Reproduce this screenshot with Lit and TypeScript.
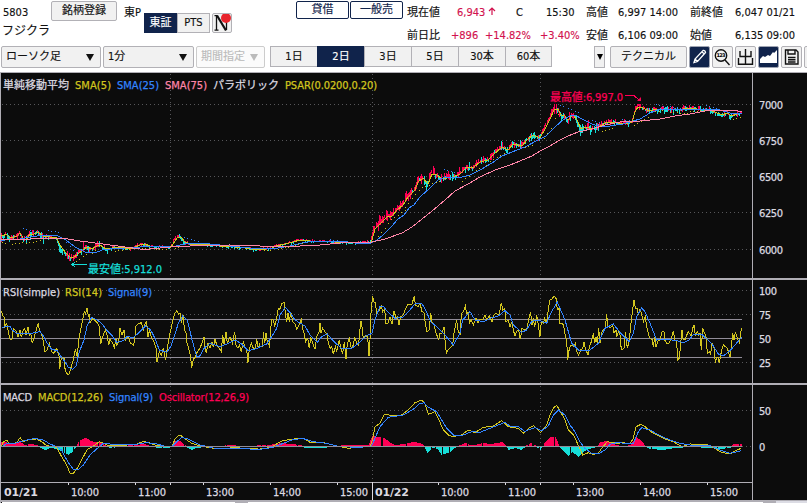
import { LitElement, html, svg, css } from "lit";
import { customElement, property } from "lit/decorators.js";

type Point = [number, number];

/** Parses "x,y x,y …" given in thirds of a pixel, relative to an origin. */
const trace = (ox: number, oy: number, data: string): Point[] =>
  data.trim().split(/\s+/).map((p) => {
    const [x, y] = p.split(",").map(Number);
    return [ox + x / 3, oy + y / 3] as Point;
  });

const pts = (data: string): Point[] =>
  data.trim().split(/\s+/).map((p) => p.split(",").map(Number) as Point);

const valueAt = (line: Point[], x: number): number => {
  for (let i = 1; i < line.length; i++) {
    if (x <= line[i][0]) {
      const [x0, y0] = line[i - 1];
      const [x1, y1] = line[i];
      return x1 === x0 ? y1 : y0 + ((y1 - y0) * (x - x0)) / (x1 - x0);
    }
  }
  return line[line.length - 1][1];
};

const toPath = (line: Point[]): string =>
  line.map(([x, y], i) => `${i ? "L" : "M"}${x.toFixed(2)} ${y.toFixed(2)}`).join("");

const sma5 = pts(`1,235 3,236 6,234 10,238 14,237 17,236 20,233 23,238 26,240 30,234 34,234 38,232 43,236 50,237 56,237
 60,245 65,252 70,257 73,258 78,254 83,250 87,247 92,249 97,246 100,245 106,249 112,248 120,247 130,249 140,245 145,244
 150,246 160,247 171,247 175,241 178,237 181,237 185,242 190,244 200,244 210,245 220,246 235,247 245,248 260,250 272,248
 276,246 285,244 293,242 300,240 310,241 320,241 335,242 350,243 360,242 371,242 372,240 375,229 377,227 382,222 387,217
 392,216 397,210 403,205 408,197 415,190 418,182 423,178 428,184 432,174 437,175 442,179 447,178 453,177 460,174 467,167
 473,168 480,162 488,160 493,155 502,147 508,150 513,144 522,146 527,140 533,135 540,138 545,129 550,119 554,110 558,109
 561,115 564,115 568,120 573,115 577,120 581,129 585,127 593,129 600,126 607,122 613,122 623,124 632,122 635,112 638,107
 643,108 647,110 653,110 663,109 680,110 687,108 697,109 707,109 715,112 722,115 727,113 732,116 737,114 742,113`);

const sma25 = pts(`1,241 8,239 20,239 30,237 45,235 58,236 66,240 75,247 85,252 95,253 102,250 110,249 125,248 140,247 155,246
 172,247 180,245 190,243 200,243 210,244 230,246 250,248 272,249 290,246 302,243 315,241 340,241 355,243 371,243 377,240
 383,235 392,226 398,219 404,215 409,208 414,205 420,197 430,188 438,180 443,178 462,177 470,175 480,170 492,163 502,156
 512,152 525,147 538,140 546,136 555,127 563,120 570,116 575,115 582,119 592,124 602,127 610,126 623,124 633,121 640,119
 650,113 660,109 680,109 707,109 720,110 730,113 742,114`);

const sma75 = pts(`1,239 30,239 55,238 68,239 80,241 95,243 110,245 125,247 140,249 150,249 170,247 190,246 230,245 260,246
 280,247 300,246 320,245 340,243 372,242 385,239 402,233 412,227 422,219 432,211 445,200 455,191 468,184 480,177 495,170
 510,165 520,161 532,156 540,151 550,146 558,141 568,136 578,132 592,129 605,125 620,122 640,121 660,119 675,116 690,114
 705,111 715,110 730,110 738,111 742,111`);

const sarAbove = [
  "23,228 35,231", "48,230 61,232", "63,238 76,253", "105,244 108,244", "184,237 200,242", "205,243 220,245",
  "330,239 342,241", "444,169 456,172", "560,105 566,107", "568,108 580,113", "592,120 606,124",
  "622,119 634,121", "656,104 668,107", "670,106 685,109", "706,105 718,109", "720,110 732,113",
].map(pts);

const sarBelow = [
  "2,242 8,243", "12,244 24,242", "26,243 40,240", "76,261 88,253", "92,253 96,250", "115,251 135,248",
  "142,248 168,249", "175,248 185,245", "250,249 271,250", "278,249 303,243", "378,236 390,221",
  "391,219 405,210", "405,207 420,188", "422,187 442,180", "462,181 475,171", "476,170 488,164",
  "490,161 505,152", "518,149 534,144", "544,138 554,123", "555,118 560,112", "602,131 615,127",
  "634,125 650,115", "652,112 664,110", "670,112 688,113", "690,111 704,110", "733,119 742,116",
].map(pts);

const rsi: Point[] = [
  ...trace(0, 280, `5,93 8,108 12,110 14,140 20,130 24,150 30,178 36,178 40,145 45,150 50,155 54,172 60,150 64,172 70,150
  74,145 78,165 84,140 88,165 92,160 97,190 103,170 110,145 115,130 118,152 124,160 130,185 135,215 140,212 148,190 155,215
  162,220 170,205 178,230 179,268 184,232 192,235 194,262 198,275 203,284 208,282 215,255 220,240 226,208 232,230 236,180
  242,150 248,120 253,95 257,102 261,83 265,108 268,105 270,128 278,115 285,122 292,128 298,140 302,192 308,170 316,150
  320,160 326,195 330,178 338,190 343,202 348,178 350,195 356,185 360,145 366,165 372,150 376,180 384,170 392,190 400,195
  404,185 407,140 414,132 424,128 430,150 436,128 440,125 444,170 448,150 455,175 462,185 468,205 471,247 478,215 484,225
  490,205 497,240 500,215 505,185 510,160 517,128 524,100 531,92 536,103 540,100 544,128 550,105 553,150 558,160 560,185
  566,205 572,230 575,264 580,238 586,232 592,215 600,205 606,188 612,172 615,205 619,218 624,190 630,205 636,185 640,200
  645,178 652,200 658,205 664,215 668,165 672,192 678,155 682,190 690,170 697,190 704,155 708,195 714,205 718,195 724,215
  730,185 735,200 740,210 744,248 748,205 754,190 760,205 766,205 770,178 775,205 779,190`),
  ...trace(260, 280, `0,200 8,200 10,155 14,190 18,160 22,185 28,198 32,160 34,118 40,120 44,140 50,115 55,85 60,88 65,70
  73,68 76,100 80,125 84,100 88,125 92,95 98,125 104,130 110,148 118,132 124,118 128,145 132,160 137,185 143,175 148,205
  152,172 158,190 165,208 170,170 178,155 180,128 183,160 188,145 195,155 202,165 205,190 210,205 215,200 220,222 226,200
  230,215 238,180 242,205 248,220 253,185 258,237 262,190 268,175 274,205 280,195 284,172 290,190 296,195 298,165 303,122
  306,140 310,175 318,165 323,172 327,228 330,180 332,110 335,75 338,48 341,65 346,68 350,100 358,90 364,78 368,95 374,88
  378,130 384,130 390,112 396,132 402,92 408,115 412,110 417,135 422,110 430,105 437,85 445,72 456,72 463,48 466,75 474,80
  480,70 486,95 492,98 496,130 501,155 508,150 512,98 516,125 522,135 528,160 536,178 540,160 546,160 552,142 555,180
  559,220 564,210 570,205 578,195 582,160 590,120 594,150 600,165 604,100 610,95 616,78 620,100 625,98 628,130 634,120
  640,135 648,115 654,130 660,118 668,120 675,105 680,120 688,108 696,125 702,105 708,100 714,105 718,100 724,68 728,90
  734,85 738,125 744,120 750,140 756,125 760,150 765,168 772,150 776,150 781,178 786,145 792,150 800,148 808,110`),
  ...trace(530, 280, `2,97 6,135 10,115 14,142 20,105 24,130 30,170 34,125 40,130 44,115 50,130 56,80 60,60 66,58 72,48
  78,55 82,90 88,85 90,130 98,130 104,150 106,170 110,180 113,240 118,205 124,195 130,198 136,190 140,215 146,225 152,210
  158,205 162,185 166,205 174,225 178,200 184,185 190,160 194,190 198,170 202,190 206,145 210,190 216,155 220,150 226,145
  230,103 234,140 242,142 248,135 252,160 258,150 260,170 266,155 270,165 274,210 282,205 286,155 292,205 298,180 304,120
  308,90 312,60 316,85 322,85 325,105 330,88 334,100 340,125 346,110 350,140 356,165 360,175 366,178 370,200 374,170
  378,200 384,182 390,180 396,155 402,155 404,180 410,190 416,190 424,175 430,152 434,178 440,185 443,240 448,235 452,190
  456,150 460,180 466,178 474,155 480,162 484,170 488,145 492,135 496,165 502,155 506,165 510,160 514,210 518,145 524,160
  528,170 532,220 538,215 542,222 546,190 552,205 556,248 560,232 564,232 568,250 574,215 580,195 586,200 592,205 600,230
  604,200 608,160 612,180 616,155 622,175 628,188 634,145`),
];

const rsiSignal: Point[] = [
  ...trace(0, 280, `5,142 30,138 36,150 50,160 80,162 95,160 120,155 132,170 142,190 155,208 172,212 182,228 195,245
  205,262 218,268 228,258 238,215 252,180 262,135 275,112 292,120 305,130 320,150 335,165 350,187 370,182 380,170 400,172
  415,160 437,138 452,150 465,175 478,210 500,217 512,200 524,165 535,130 548,108 562,120 575,175 590,230 598,230 612,205
  630,190 660,200 680,192 705,180 722,190 745,212 772,205`),
  ...trace(260, 280, `0,200 20,192 35,170 50,145 60,105 76,82 92,100 105,120 135,138 150,165 172,187 185,170 202,162
  222,185 245,205 275,205 295,190 318,168 336,160 345,120 360,78 370,78 382,95 405,115 428,112 445,95 465,72 485,70 497,90
  512,125 530,140 555,165 580,195 600,160 608,120 630,95 645,120 670,125 690,115 715,108 735,92 750,105 760,135 785,157
  800,150 812,128`),
  ...trace(530, 280, `10,122 25,120 50,130 62,100 82,66 105,120 125,190 145,210 180,210 205,190 225,145 250,132 272,160
  298,185 310,160 320,110 335,84 345,95 360,130 380,180 410,178 440,182 460,188 478,180 490,163 515,163 545,190 565,222
  580,228 600,212 615,195 634,172`),
];

const macd: Point[] = [
  ...trace(0, 280, `5,498 10,485 20,480 28,492 50,488 60,473 70,485 90,478 110,477 125,485 140,497 170,502 185,530
  200,555 210,580 220,580 235,560 250,530 262,508 275,502 285,495 298,485 312,490 325,498 350,495 380,495 410,492 430,485
  445,487 465,495 490,498 515,500 525,478 535,467 545,468 560,480 575,490 600,498 630,503 660,507 700,503 740,505 775,507`),
  ...trace(260, 280, `0,507 35,502 50,492 65,483 90,478 130,475 150,487 190,488 230,498 265,505 300,500 330,500 337,480
  345,440 360,430 373,402 400,408 425,405 445,390 465,368 485,360 495,372 505,403 525,395 537,420 550,450 565,465 578,470
  605,465 625,450 645,458 670,442 700,438 725,422 745,440 775,445 790,460 808,443`),
  ...trace(530, 280, `0,443 10,437 32,457 50,435 60,405 72,382 80,376 90,392 105,420 115,450 130,465 140,485 158,525
  175,518 190,523 205,520 215,505 232,485 260,490 280,488 300,492 310,475 318,440 333,433 345,440 370,460 400,475 430,485
  455,500 480,492 530,493 550,503 575,517 600,522 620,510 634,505`),
];

const macdSignal: Point[] = [
  ...trace(0, 280, `5,502 20,490 40,492 60,485 80,480 105,475 130,480 150,492 170,500 185,510 195,530 210,555 220,568
  235,568 250,555 270,525 290,507 310,490 330,492 360,495 400,494 440,488 470,492 500,500 515,500 530,485 545,473 560,475
  580,485 600,495 640,504 700,505 750,507 775,508`),
  ...trace(260, 280, `0,508 35,503 70,490 100,478 130,476 160,485 200,490 240,500 300,502 335,498 345,475 360,440
  385,412 430,405 460,388 478,372 492,368 505,382 530,395 545,420 560,445 580,465 605,467 635,455 660,457 690,445 735,427
  750,438 775,440 795,455 808,448`),
  ...trace(530, 280, `0,448 15,443 35,452 55,438 70,405 85,390 105,405 120,435 135,455 150,485 165,505 185,520 205,522
  225,510 240,493 265,487 295,492 310,490 325,455 335,443 360,450 390,467 420,480 450,490 480,495 540,497 570,510 600,520
  634,512`),
];

const oscillator = pts(`0,4 4,5 8,2 14,2 20,4 24,1 30,2 37,1 40,-1 45,-3 50,-1 56,-2 62,-5 68,-8 72,-5 76,0 78,4 82,7 86,8
 90,5 95,4 100,4 104,1 110,-1 120,0 135,1 144,2 150,0 160,-1 170,-1 174,4 178,6 182,3 186,0 191,-3 196,-1 205,0 223,0
 226,1 245,0 268,1 276,2 281,3 290,2 300,1 305,-1 320,-1 348,1 368,1 372,10 377,9 384,8 390,3 394,1 405,2 412,4 420,3
 424,0 427,-6 432,-1 437,-2 441,-8 450,-5 454,-1 460,1 465,3 470,1 475,1 482,3 490,2 497,3 502,4 506,0 508,-3 515,-1
 521,-3 526,1 531,3 536,0 540,-3 544,3 550,9 555,9 559,0 563,-4 568,-9 572,-5 578,-10 584,-4 592,-1 597,0 600,4 607,5
 615,1 625,0 630,1 636,9 641,5 645,0 650,-2 662,-3 675,-1 690,0 710,-1 720,-2 730,-1 733,2 742,2`);

const noise = (n: number): number => {
  const v = Math.sin(n * 12.9898) * 43758.5453;
  return v - Math.floor(v);
};

const volatility = (x: number): number => {
  if (x < 45) return 5;
  if (x < 58) return 2.5;
  if (x < 90) return 5;
  if (x < 115) return 3.5;
  if (x < 371) return x > 172 && x < 188 ? 2.5 : 1.6;
  if (x < 445) return 6;
  if (x < 550) return 5;
  if (x < 600) return 6.5;
  return 3.6;
};

const candles = Array.from({ length: 663 }, (_, i) => {
  const x = 1 + i * 1.118;
  const mid = valueAt(sma5, x);
  const slope = valueAt(sma5, x + 2.5) - valueAt(sma5, x - 2.5);
  const v = volatility(x);
  const up = noise(i + 0.3) - 0.5 > slope * 0.07;
  const wide = noise(i + 7.7);
  const span = v * (0.55 + 1.25 * wide * wide);
  const drift = up ? -0.6 : 0.6;
  const top = mid + drift + slope * 0.3 - span * (0.2 + 0.6 * noise(i + 3.1));
  return { x: Math.round(x), y: Math.max(104, Math.round(top)), h: Math.max(1, Math.round(span)), up };
});

const candlePath = (up: boolean) =>
  candles.filter((c) => c.up === up).map((c) => `M${c.x} ${c.y}h1v${c.h}h-1z`).join("");

const dotPath = (runs: Point[][]) =>
  runs.map((run) => {
    let d = "";
    for (let x = run[0][0]; x <= run[run.length - 1][0]; x += 3.4) {
      d += `M${Math.round(x)} ${Math.round(valueAt(run, x))}h1v1h-1z`;
    }
    return d;
  }).join("");

const barPath = (positive: boolean) => {
  let d = "";
  for (let x = 1; x < 742; x++) {
    const h = Math.round(valueAt(oscillator, x));
    if (h === 0 || h > 0 !== positive || noise(x) < 0.08) continue;
    d += positive ? `M${x} ${446 - h}h1v${h}h-1z` : `M${x} 447h1v${-h}h-1z`;
  }
  return d;
};

@customElement("price-chart")
export class PriceChart extends LitElement {
  static styles = css`
    :host { display: block; }
    svg { display: block; font: 11px "DejaVu Sans Condensed", "DejaVu Sans", "Noto Sans CJK JP", sans-serif; font-stretch: condensed; }
    .bg { fill: #0c0c0c; }
    .page { fill: #fff; }
    .frame { fill: #b0aeb5; }
    .thumb { fill: #dcdce4; }
    .grid { stroke: #57575a; stroke-dasharray: 1 3; fill: none; shape-rendering: crispEdges; }
    .level { fill: #918c98; }
    .line { fill: none; stroke-width: 1; shape-rendering: crispEdges; }
    .shapes { shape-rendering: crispEdges; }
    .yellow { stroke: #d2c51e; }
    .blue { stroke: #3385ff; }
    .pink { stroke: #ff85a8; }
    .red { stroke: #ff0055; }
    .cyan { stroke: #16ded8; }
    .f-white { fill: #dcdae0; }
    .f-yellow { fill: #d2c51e; }
    .f-blue { fill: #3385ff; }
    .f-pink { fill: #ff85a8; }
    .f-red { fill: #ff0055; }
    .f-cyan { fill: #16ded8; }
    text { stroke-width: 0.25px; }
    text.f-white { stroke: #dcdae0; }
    text.f-yellow { stroke: #d2c51e; }
    text.f-blue { stroke: #3385ff; }
    text.f-pink { stroke: #ff85a8; }
    text.f-red { stroke: #ff0055; }
    text.f-cyan { stroke: #16ded8; }
    .bold { font-family: "DejaVu Sans", sans-serif; font-stretch: normal; font-weight: bold; }
    text.bold { stroke: none; }
  `;

  private label(text: string, x: number, y: number, width: number, cls: string) {
    return svg`<text class=${cls} x=${x} y=${y} textLength=${width}>${text}</text>`;
  }

  private stroke(line: Point[], cls: string) {
    return svg`<path class="line ${cls}" d=${toPath(line)} />`;
  }

  render() {
    const grid = [104.5, 140.5, 176.5, 212.5, 249.5, 290.5, 314.5, 362.5, 410.5, 446.5];
    const ticks = [68, 135, 170, 203, 270, 337, 438, 505, 540, 573, 640, 707];
    return html`<svg width="807" height="431" viewBox="0 72 807 431">
      <rect class="bg" y="72" width="807" height="431" />
      ${grid.map((y) => svg`<path class="grid" d="M2 ${y}H752" />`)}
      ${[170.5, 372.5, 540.5].map((x) => svg`<path class="grid" d="M${x} 74V482" />`)}
      <g class="level shapes">
        <rect x="1" y="319" width="741" height="1" /><rect x="1" y="338" width="741" height="1" />
        <rect x="1" y="357" width="741" height="1" />
      </g>

      <g class="shapes">
        <path class="f-red" d=${candlePath(true)} /><path class="f-cyan" d=${candlePath(false)} />
        <path class="f-blue" d=${dotPath(sarAbove)} /><path class="f-yellow" d=${dotPath(sarBelow)} />
      </g>
      ${this.stroke(sma5, "yellow")} ${this.stroke(sma25, "blue")} ${this.stroke(sma75, "pink")}

      ${this.stroke(rsi, "yellow")} ${this.stroke(rsiSignal, "blue")}
      <g class="shapes"><path class="f-red" d=${barPath(true)} /><path class="f-cyan" d=${barPath(false)} /></g>
      ${this.stroke(macd, "yellow")} ${this.stroke(macdSignal, "blue")}
      <rect class="level shapes" x="1" y="446" width="741" height="1" />

      <path class="line cyan" d="M72 264.5H87M75 262L72 264.5L75 267" />
      <path class="line red" d="M625 95.5H634L639 100" /><path class="f-red" d="M637 101h4v-4z" />

      <g class="frame shapes">
        <rect y="72" width="807" height="1" /><rect y="72" width="1" height="431" />
        <rect y="278" width="807" height="2" /><rect y="383" width="807" height="2" />
        <rect x="752" y="72" width="1" height="428" /><rect y="482" width="753" height="1" />
        <rect y="500" width="807" height="2" />
      </g>
      <g class="shapes f-white">
        ${ticks.map((x) => svg`<rect x=${x} y="483" width="1" height="2" />`)}
        <rect x="372" y="482" width="1" height="18" />
      </g>
      <g class="shapes">
        <rect class="page" x="2" y="502" width="233" height="1" /><rect class="frame" x="235" y="502" width="13" height="1" />
        <rect class="page" x="248" y="502" width="515" height="1" /><rect class="frame" x="763" y="502" width="13" height="1" />
        <rect class="thumb" x="776" y="501" width="31" height="2" />
      </g>

      ${this.label("単純移動平均", 3, 89, 66, "f-white")}
      ${this.label("SMA(5)", 75, 89, 36, "f-yellow")}
      ${this.label("SMA(25)", 117, 89, 42, "f-blue")}
      ${this.label("SMA(75)", 165, 89, 42, "f-pink")}
      ${this.label("パラボリック", 213, 89, 66, "f-white")}
      ${this.label("PSAR(0.0200,0.20)", 285, 89, 92, "f-yellow")}
      ${this.label("最高値:6,997.0", 550, 101, 73, "f-red")}
      ${this.label("最安値:5,912.0", 88, 273, 74, "f-cyan")}
      ${this.label("RSI(simple)", 3, 296, 57, "f-white")}
      ${this.label("RSI(14)", 65, 296, 37, "f-yellow")}
      ${this.label("Signal(9)", 108, 296, 44, "f-blue")}
      ${this.label("MACD", 3, 401, 29, "f-white")}
      ${this.label("MACD(12,26)", 38, 401, 65, "f-yellow")}
      ${this.label("Signal(9)", 109, 401, 44, "f-blue")}
      ${this.label("Oscillator(12,26,9)", 159, 401, 90, "f-red")}

      ${[[7000, 109], [6750, 145], [6500, 181], [6250, 217], [6000, 254]].map(([v, y]) =>
        this.label(String(v), 759, y, 24, "f-white"))}
      ${this.label("100", 759, 295, 18, "f-white")}
      ${this.label("75", 759, 319, 12, "f-white")}
      ${this.label("50", 759, 343, 12, "f-white")}
      ${this.label("25", 759, 367, 12, "f-white")}
      ${this.label("50", 759, 415, 12, "f-white")}
      <text class="f-white" x="759" y="451">0</text>

      ${([["10:00", 71], ["11:00", 138], ["13:00", 206], ["14:00", 273], ["15:00", 340], ["10:00", 441],
        ["11:00", 508], ["13:00", 576], ["14:00", 643], ["15:00", 710]] as [string, number][]).map(([t, x]) =>
        this.label(t, x, 496, 28, "f-white"))}
      ${this.label("01/21", 4, 496, 34, "f-white bold")}
      ${this.label("01/22", 375, 496, 34, "f-white bold")}
    </svg>`;
  }
}

@customElement("select-box")
export class SelectBox extends LitElement {
  @property() label = "";
  @property({ type: Boolean, reflect: true }) disabled = false;

  static styles = css`
    :host {
      display: flex; flex: none; align-items: center; justify-content: space-between; box-sizing: border-box;
      height: 22px; padding: 0 6px 0 4px; border: 1px solid #b2b1b6; border-radius: 2px; background: #f1f1f1; color: #111;
    }
    :host([disabled]) { background: #fbfbfb; color: #bbb; border-color: #ccc; }
    .arrow { width: 8px; height: 7px; fill: currentColor; }
  `;

  render() {
    return html`<span>${this.label}</span><svg class="arrow" viewBox="0 0 8 7"><path d="M0 0h8L4 7z" /></svg>`;
  }
}

@customElement("app-root")
export class AppRoot extends LitElement {
  static styles = css`
    :host {
      display: block; width: 807px; height: 503px; overflow: hidden; background: #fff; color: #111;
      font: 11px/14px "DejaVu Sans Condensed", "DejaVu Sans", "Noto Sans CJK JP", sans-serif;
      font-stretch: condensed; white-space: nowrap; -webkit-text-stroke: 0.15px currentColor;
    }
    .top { display: flex; align-items: flex-start; height: 46px; }
    .top > * { flex: none; }
    .name { width: 48px; padding: 6px 0 0 3px; box-sizing: border-box; display: grid; gap: 4px; }
    .company { font-size: 12px; margin-left: -1px; }
    .button {
      box-sizing: border-box; display: flex; flex: none; align-items: center; justify-content: center;
      border: 1px solid #b2b1b6; border-radius: 2px; background: #f1f1f1;
    }
    .register { width: 66px; height: 20px; margin: 1px 7px 0 3px; }
    .market { width: 20px; padding-top: 6px; }
    .exchange { display: flex; margin-top: 13px; width: 66px; height: 20px; }
    .exchange .button { flex: 1; border-radius: 0; }
    .exchange .on, .period.on { background: #10234b; color: #fff; border-color: #10234b; }
    .news { width: 20px; height: 20px; margin: 13px 64px 0 2px; }
    .tag {
      box-sizing: border-box; width: 53px; height: 18px; margin: 1px 1px 0 0; border: 1px solid #10234b;
      border-radius: 2px; display: flex; align-items: center; justify-content: center; color: #10234b;
    }
    .quotes { display: grid; gap: 9px; padding: 6px 0 0 3px; }
    .row { display: flex; }
    .rise { color: #d2124e; }
    .w32 { width: 32px; } .w30 { width: 30px; } .w40 { width: 40px; } .w34 { width: 34px; }
    .w45 { width: 45px; } .w44 { width: 44px; } .w50 { width: 50px; } .w55 { width: 55px; }
    .w59 { width: 59px; } .w46 { width: 46px; } .w72 { width: 72px; }
    .up { height: 9px; width: 8px; margin-left: 3px; vertical-align: 0; }
    .bar { display: flex; height: 26px; align-items: flex-start; padding-left: 1px; }
    .style { width: 100px; margin-right: 2px; }
    .interval { width: 91px; margin-right: 2px; }
    .range { width: 69px; margin-right: 5px; }
    .periods { display: flex; flex: none; width: 282px; margin-right: 42px; }
    .period { width: 47px; height: 21px; border-radius: 0; border-right-width: 0; }
    .period:last-child { border-right-width: 1px; }
    .more { width: 11px; height: 22px; margin-right: 5px; border-radius: 0; }
    .tech { width: 77px; height: 22px; margin-right: 2px; }
    .tool { width: 21px; height: 22px; margin-right: 2px; }
    .tool.on { background: #10234b; border-color: #9fa4b2; }
    .tool svg { width: 19px; height: 20px; }
    .ink { fill: none; stroke: #111; stroke-width: 1.4; }
    .light { fill: none; stroke: #fff; stroke-width: 1.3; }
    .tiny { font: bold 5px "DejaVu Sans", sans-serif; }
    .down { width: 6px; height: 6px; }
  `;

  private tool(body: unknown, on = false) {
    return html`<div class="button tool ${on ? "on" : ""}"><svg viewBox="0 0 19 20">${body}</svg></div>`;
  }

  render() {
    return html`
      <div class="top">
        <div class="name"><span>5803</span><span class="company">フジクラ</span></div>
        <div class="button register">銘柄登録</div>
        <div class="market">東P</div>
        <div class="exchange"><div class="button on">東証</div><div class="button">PTS</div></div>
        <div class="button news">
          <svg width="18" height="18" viewBox="0 0 18 18">
            <path d="M3.5 2V16M13.5 2V16M1.5 1.7H4.5M1.5 16.2H5.5M11 1.7H15" fill="none" stroke="#111" stroke-width="1.3" />
            <path d="M4 1.5L13 16.5" fill="none" stroke="#111" stroke-width="2.2" />
            <circle cx="13" cy="4" r="5" fill="#e8242c" />
          </svg>
        </div>
        <div class="tag">貸借</div>
        <div class="tag">一般売</div>
        <div class="quotes">
          <div class="row">
            <span class="w50">現在値</span>
            <span class="w59 rise">6,943<svg class="up" viewBox="0 0 8 9"><path d="M4 8V1M1 4L4 1L7 4" fill="none" stroke="currentColor" stroke-width="1.2" /></svg></span>
            <span class="w30">C</span><span class="w40">15:30</span>
            <span class="w32">高値</span><span class="w72">6,997 14:00</span>
            <span class="w45">前終値</span><span>6,047 01/21</span>
          </div>
          <div class="row">
            <span class="w44">前日比</span><span class="w34 rise">+896</span><span class="w55 rise">+14.82%</span>
            <span class="w46 rise">+3.40%</span>
            <span class="w32">安値</span><span class="w72">6,106 09:00</span>
            <span class="w45">始値</span><span>6,135 09:00</span>
          </div>
        </div>
      </div>
      <div class="bar">
        <select-box class="style" label="ローソク足"></select-box>
        <select-box class="interval" label="1分"></select-box>
        <select-box class="range" label="期間指定" disabled></select-box>
        <div class="periods">
          ${["1日", "2日", "3日", "5日", "30本", "60本"].map((p) =>
            html`<div class="button period ${p === "2日" ? "on" : ""}">${p}</div>`)}
        </div>
        <div class="button more"><svg class="down" viewBox="0 0 6 6"><path d="M0 0h6L3 6z" /></svg></div>
        <div class="button tech">テクニカル</div>
        ${this.tool(svg`<path class="light" d="M4 15.5L5 12L13 3.5Q15 3 15.5 5.5L7.5 14.5ZM5 12L7.5 14.5M12 5L14.5 7" />`, true)}
        ${this.tool(svg`<circle class="ink" cx="8" cy="8.5" r="5.7" /><path class="ink" stroke-width="2" d="M12 13L16.5 18" />
          <text class="tiny" x="3.6" y="10.3" textLength="9">123</text>`)}
        ${this.tool(svg`<path class="ink" d="M9.5 2V17M4 4V9.5H15V4M2.5 11V17.2H16.5V11" />`)}
        ${this.tool(svg`<path fill="#fff" d="M1 16V12L4 9L6 10L9 8L11 9L14 5L15 6L18 3V16Z" />`, true)}
        ${this.tool(svg`<path class="ink" d="M3.5 3H14L16 5V17H3.5ZM6 3V7H13V3M6 10.5H13.5M6 12.7H13.5M6 15H13.5" />`)}
        <div class="button tool"></div>
      </div>
      <price-chart></price-chart>`;
  }
}
